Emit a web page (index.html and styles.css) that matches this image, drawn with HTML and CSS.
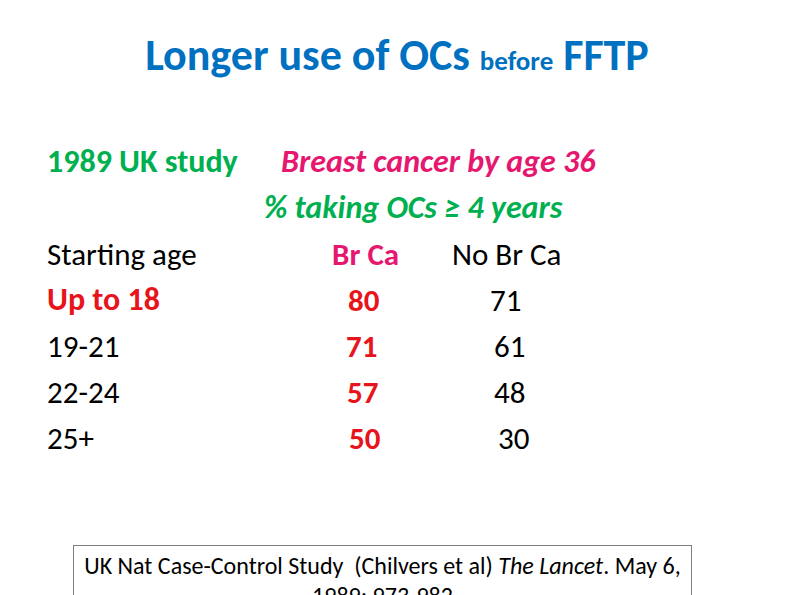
FILE: index.html
```html
<!DOCTYPE html>
<html lang="en">
<head>
<meta charset="utf-8">
<title>Longer use of OCs before FFTP</title>
<link rel="stylesheet" href="styles.css">
</head>
<body>
<main class="slide">
  <h1 class="title">Longer use of OCs <span class="title-small">before</span> FFTP</h1>
  <section class="study">
    <div class="study-row">
      <span class="study-name">1989 UK study</span>
      <span class="study-head">Breast cancer by age 36</span>
    </div>
    <div class="study-sub">% taking OCs ≥ 4 years</div>
  </section>
  <section class="table">
    <div class="cell">Starting age</div>
    <div class="cell col-br head-br">Br Ca</div>
    <div class="cell col-no">No Br Ca</div>

    <div class="cell hl">Up to 18</div>
    <div class="cell col-br num pad-a">80</div>
    <div class="cell col-no pad-1">71</div>

    <div class="cell">19-21</div>
    <div class="cell col-br num pad-b">71</div>
    <div class="cell col-no pad-2">61</div>

    <div class="cell">22-24</div>
    <div class="cell col-br num pad-c">57</div>
    <div class="cell col-no pad-2">48</div>

    <div class="cell">25+</div>
    <div class="cell col-br num pad-d">50</div>
    <div class="cell col-no pad-3">30</div>
  </section>
  <footer class="cite">
    <p>UK Nat Case-Control Study&nbsp; (Chilvers et al) <i>The Lancet</i>. May 6,<br>1989; 973-982</p>
  </footer>
</main>
</body>
</html>
```

FILE: styles.css
```css
html, body {
  margin: 0;
  padding: 0;
  background: #ffffff;
}

.slide {
  width: 794px;
  height: 595px;
  overflow: hidden;
  position: relative;
  background: #ffffff;
  font-family: Calibri, Carlito, Lato, "Noto Sans", sans-serif;
  color: #000000;
}

.title {
  margin: 0;
  padding-top: 25px;
  height: 60px;
  line-height: 60px;
  text-align: center;
  font-size: 44px;
  font-weight: 700;
  color: #0070c0;
}

.title-small {
  font-size: 27px;
}

.study {
  margin-top: 54px;
  font-size: 32px;
  font-weight: 700;
  line-height: 46px;
}

.study-row {
  display: grid;
  grid-template-columns: 234px auto;
  padding-left: 47px;
}

.study-name {
  color: #00b050;
}

.study-head {
  color: #e5176f;
  font-style: italic;
}

.study-sub {
  padding-left: 264px;
  color: #00b050;
  font-style: italic;
}

.table {
  display: grid;
  grid-template-columns: 285px 120px 1fr;
  grid-auto-rows: 46px;
  padding-left: 47px;
  font-size: 31px;
  line-height: 46px;
}

.head-br {
  color: #e5176f;
  font-weight: 700;
}

.hl,
.num {
  color: #e8141b;
  font-weight: 700;
}

.hl {
  font-size: 32px;
}

.pad-a { padding-left: 16px; }
.pad-b { padding-left: 14px; }
.pad-c { padding-left: 15px; }
.pad-d { padding-left: 17px; }
.pad-1 { padding-left: 38px; }
.pad-2 { padding-left: 42px; }
.pad-3 { padding-left: 46px; }

.cite {
  margin-top: 84px;
  margin-left: 73px;
  width: 619px;
  height: 90px;
  box-sizing: border-box;
  border: 1px solid #7f7f7f;
  padding: 5px 2px 0;
}

.cite p {
  margin: 0;
  text-align: center;
  font-size: 24px;
  line-height: 30px;
  white-space: nowrap;
}
```
